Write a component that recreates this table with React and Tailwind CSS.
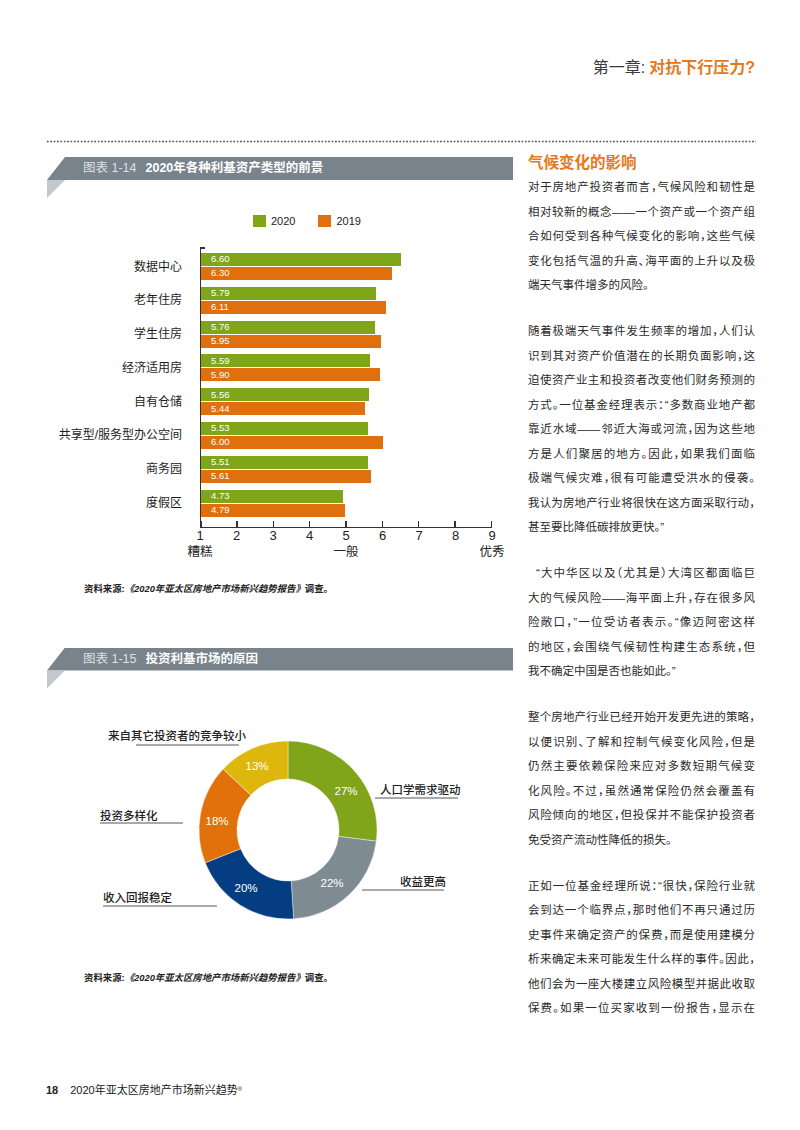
import React from "react";

const BARS = [
  ["数据中心", 6.6, 6.3],
  ["老年住房", 5.79, 6.11],
  ["学生住房", 5.76, 5.95],
  ["经济适用房", 5.59, 5.9],
  ["自有仓储", 5.56, 5.44],
  ["共享型/服务型办公空间", 5.53, 6.0],
  ["商务园", 5.51, 5.61],
  ["度假区", 4.73, 4.79],
];

const PARAS = [
  [
    "对于房地产投资者而言，气候风险和韧性是",
    "相对较新的概念——一个资产或一个资产组",
    "合如何受到各种气候变化的影响，这些气候",
    "变化包括气温的升高、海平面的上升以及极",
    "端天气事件增多的风险。",
  ],
  [
    "随着极端天气事件发生频率的增加，人们认",
    "识到其对资产价值潜在的长期负面影响，这",
    "迫使资产业主和投资者改变他们财务预测的",
    "方式。一位基金经理表示：“多数商业地产都",
    "靠近水域——邻近大海或河流，因为这些地",
    "方是人们聚居的地方。因此，如果我们面临",
    "极端气候灾难，很有可能遭受洪水的侵袭。",
    "我认为房地产行业将很快在这方面采取行动，",
    "甚至要比降低碳排放更快。”",
  ],
  [
    "“大中华区以及（尤其是）大湾区都面临巨",
    "大的气候风险——海平面上升，存在很多风",
    "险敞口，”一位受访者表示。“像迈阿密这样",
    "的地区，会围绕气候韧性构建生态系统，但",
    "我不确定中国是否也能如此。”",
  ],
  [
    "整个房地产行业已经开始开发更先进的策略，",
    "以便识别、了解和控制气候变化风险，但是",
    "仍然主要依赖保险来应对多数短期气候变",
    "化风险。不过，虽然通常保险仍然会覆盖有",
    "风险倾向的地区，但投保并不能保护投资者",
    "免受资产流动性降低的损失。",
  ],
  [
    "正如一位基金经理所说：“很快，保险行业就",
    "会到达一个临界点，那时他们不再只通过历",
    "史事件来确定资产的保费，而是使用建模分",
    "析来确定未来可能发生什么样的事件。因此，",
    "他们会为一座大楼建立风险模型并据此收取",
    "保费。如果一位买家收到一份报告，显示在",
  ],
];

const DONUT = [
  { pct: 27, color: "#80a51b", label: "27%", lx: 299, ly: 102 },
  { pct: 22, color: "#7f8b93", label: "22%", lx: 285, ly: 194 },
  { pct: 20, color: "#053d83", label: "20%", lx: 199, ly: 199 },
  { pct: 18, color: "#e1720b", label: "18%", lx: 170, ly: 132 },
  { pct: 13, color: "#ddb70c", label: "13%", lx: 210, ly: 77 },
];

function arcPath(cx, cy, R, r, a0, a1) {
  const rad = (a) => (a * Math.PI) / 180;
  const p = (rr, a) => [cx + rr * Math.sin(rad(a)), cy - rr * Math.cos(rad(a))];
  const large = a1 - a0 > 180 ? 1 : 0;
  const [x0, y0] = p(R, a0);
  const [x1, y1] = p(R, a1);
  const [x2, y2] = p(r, a1);
  const [x3, y3] = p(r, a0);
  return `M${x0} ${y0} A${R} ${R} 0 ${large} 1 ${x1} ${y1} L${x2} ${y2} A${r} ${r} 0 ${large} 0 ${x3} ${y3} Z`;
}

function Banner({ num, title }) {
  return (
    <div>
      <div className="h-[23px] bg-[#78838b] [clip-path:polygon(18px_0,100%_0,100%_100%,0_100%)] flex items-center pl-[36px] text-[12.5px] leading-none">
        <span className="text-[#dde1e4]">{num}</span>
        <span className="ml-[9px] font-bold text-white">{title}</span>
      </div>
      <div className="h-[18px] w-[18px] bg-[#c3c8cc] [clip-path:polygon(0_0,100%_0,0_100%)]" />
    </div>
  );
}

function Source() {
  return (
    <div className="ml-[37px] text-[9.4px] font-bold text-[#222] leading-[14px]">
      资料来源:<span className="italic">《2020年亚太区房地产市场新兴趋势报告》</span>调查。
    </div>
  );
}

function BarChart() {
  const ticks = [1, 2, 3, 4, 5, 6, 7, 8, 9];
  return (
    <div className="flex mt-[20px]">
      <div className="w-[135px] flex flex-col pt-[6px] gap-[6.8px]">
        {BARS.map(([l]) => (
          <div key={l} className="h-[27px] flex items-center justify-end text-[12px] text-[#1e1e1e] whitespace-nowrap">
            {l}
          </div>
        ))}
      </div>
      <div className="ml-[18px] w-[292px]">
        <div className="relative border-l-[1.5px] border-[#333] pt-[6px] pb-[4px] flex flex-col gap-[6.8px]">
          <div className="absolute -left-[1.5px] top-0 w-[5px] h-[1.5px] bg-[#333]" />
          {BARS.map(([l, a, b]) => (
            <div key={l} className="flex flex-col gap-px">
              <div
                className="h-[13px] bg-[#7fa519] flex items-center pl-[10px] text-[9.5px] text-white"
                style={{ width: `${30.9 * a - 3.7}px` }}
              >
                {a.toFixed(2)}
              </div>
              <div
                className="h-[13px] bg-[#e0700e] flex items-center pl-[10px] text-[9.5px] text-white"
                style={{ width: `${30.9 * b - 3.7}px` }}
              >
                {b.toFixed(2)}
              </div>
            </div>
          ))}
        </div>
        <div className="h-[7px] border-b-[1.5px] border-[#333] flex justify-between">
          {ticks.map((t) => (
            <div key={t} className="w-[1.5px] h-full bg-[#333]" />
          ))}
        </div>
        <div className="-mx-[10px] flex justify-between text-[13px] leading-[16px] text-[#222]">
          {ticks.map((t) => (
            <div key={t} className="w-[20px] text-center">
              {t}
            </div>
          ))}
        </div>
        <div className="-mx-[20px] flex justify-between text-[12.5px] leading-[16px] text-[#222]">
          <div className="w-[40px] text-center">糟糕</div>
          <div className="w-[40px] text-center">一般</div>
          <div className="w-[40px] text-center">优秀</div>
        </div>
      </div>
    </div>
  );
}

function Donut() {
  let acc = 0;
  const segs = DONUT.map((d) => {
    const a0 = (acc / 100) * 360;
    acc += d.pct;
    const a1 = (acc / 100) * 360;
    return { ...d, path: arcPath(241, 141, 89, 51, a0, a1) };
  });
  const lines = [
    [89, 56, 192],
    [328, 109, 411],
    [53, 134, 136],
    [315, 201, 397],
    [56, 217, 170],
  ];
  const labels = [
    ["来自其它投资者的竞争较小", "left-[61px] top-[39px]"],
    ["人口学需求驱动", "left-[333px] top-[93px]"],
    ["投资多样化", "left-[53px] top-[119px]"],
    ["收益更高", "left-[353px] top-[185px]"],
    ["收入回报稳定", "left-[56px] top-[201px]"],
  ];
  return (
    <div className="relative h-[250px]">
      <svg className="absolute inset-0" width="466" height="250" viewBox="0 0 466 250">
        {segs.map((s) => (
          <path key={s.label} d={s.path} fill={s.color} stroke="#ffffff" strokeWidth="0.4" />
        ))}
        {segs.map((s) => (
          <text
            key={"t" + s.label}
            x={s.lx}
            y={s.ly}
            fill="#ffffff"
            fontSize="11.5"
            textAnchor="middle"
            dominantBaseline="central"
            fontFamily="'Liberation Sans', Arial, sans-serif"
          >
            {s.label}
          </text>
        ))}
        {lines.map(([x0, y, x1], i) => (
          <line key={i} x1={x0} y1={y} x2={x1} y2={y} stroke="#555" strokeWidth="1" />
        ))}
      </svg>
      {labels.map(([t, pos]) => (
        <div key={t} className={`absolute ${pos} text-[11.5px] leading-[16px] text-[#222] font-medium whitespace-nowrap`}>
          {t}
        </div>
      ))}
    </div>
  );
}

export default function App() {
  return (
    <div className="w-[800px] h-[1130px] bg-white relative overflow-hidden font-['Liberation_Sans','Noto_Sans_CJK_SC',sans-serif] text-[#222]">
      {/* chapter header */}
      <div className="pt-[58px] pr-[45px] flex justify-end text-[16px] leading-[20px]">
        <span className="text-[#3a3a3a]">第一章: </span>
        <span className="ml-[4px] font-bold text-[#e5791d]">对抗下行压力?</span>
      </div>

      {/* dotted rule */}
      <div className="mt-[62px] ml-[46px] w-[710px] h-[3px] bg-[radial-gradient(circle,#555_0.8px,transparent_1.2px)] bg-[length:3.4px_3px]" />

      {/* columns */}
      <div className="mt-[9px] flex">
        {/* left column */}
        <div className="ml-[47px] w-[466px] pt-[5px]">
          <Banner num="图表 1-14" title="2020年各种利基资产类型的前景" />
          <div className="mt-[17px] ml-[206px] flex items-center text-[11px] leading-[12px] text-[#222]">
            <div className="w-[13px] h-[12px] bg-[#7fa519]" />
            <span className="ml-[5px]">2020</span>
            <div className="ml-[23px] w-[13px] h-[12px] bg-[#e0700e]" />
            <span className="ml-[5px]">2019</span>
          </div>
          <BarChart />
          <div className="mt-[22px]">
            <Source />
          </div>
          <div className="mt-[52px]">
            <Banner num="图表 1-15" title="投资利基市场的原因" />
          </div>
          <Donut />
          <div className="mt-[32px]">
            <Source />
          </div>
        </div>

        {/* right column */}
        <div className="ml-[15px] w-[227px]">
          <h2 className="text-[15.5px] leading-[22px] font-bold text-[#e5791d]">气候变化的影响</h2>
          <div className="mt-[1px] flex flex-col gap-[21.5px] text-[11.5px] leading-[24.5px] text-[#2a2a2a] [font-feature-settings:'halt']">
            {PARAS.map((p, pi) => (
              <div key={pi}>
                {p.map((line, li) => {
                  const last = li === p.length - 1 && pi !== PARAS.length - 1;
                  const indent = pi === 2 && li === 0;
                  return (
                    <div
                      key={li}
                      className={
                        (indent ? "pl-[8px] " : "") +
                        (last
                          ? "whitespace-nowrap"
                          : "whitespace-nowrap text-justify [text-align-last:justify]")
                      }
                    >
                      {line}
                    </div>
                  );
                })}
              </div>
            ))}
          </div>
        </div>
      </div>

      {/* footer */}
      <div className="absolute left-[46px] top-[1082px] flex items-baseline text-[11px] leading-[16px] text-[#222]">
        <span className="font-bold">18</span>
        <span className="ml-[12px]">
          2020年亚太区房地产市场新兴趋势<sup className="text-[6px]">®</sup>
        </span>
      </div>
    </div>
  );
}
